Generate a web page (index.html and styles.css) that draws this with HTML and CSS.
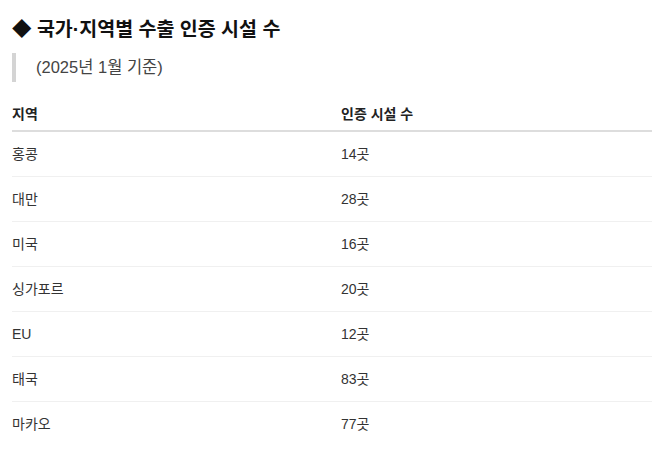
FILE: index.html
```html
<!DOCTYPE html>
<html lang="ko">
<head>
<meta charset="utf-8">
<link rel="stylesheet" href="styles.css">
</head>
<body>
<main class="page">
  <h2 class="title">◆ 국가·지역별 수출 인증 시설 수</h2>
  <blockquote class="note">(2025년 1월 기준)</blockquote>
  <table class="data">
    <thead>
      <tr><th class="c1">지역</th><th>인증 시설 수</th></tr>
    </thead>
    <tbody>
      <tr><td class="c1">홍콩</td><td>14곳</td></tr>
      <tr><td class="c1">대만</td><td>28곳</td></tr>
      <tr><td class="c1">미국</td><td>16곳</td></tr>
      <tr><td class="c1">싱가포르</td><td>20곳</td></tr>
      <tr><td class="c1">EU</td><td>12곳</td></tr>
      <tr><td class="c1">태국</td><td>83곳</td></tr>
      <tr><td class="c1">마카오</td><td>77곳</td></tr>
    </tbody>
  </table>
</main>
</body>
</html>
```
FILE: styles.css
```css
html, body {
  margin: 0;
  padding: 0;
  background: #fff;
}
.page {
  padding: 0 12px;
  font-family: "Liberation Sans", "Noto Sans CJK KR", sans-serif;
  color: #222;
}
.title {
  margin: 15px 0 0;
  font-size: 19.5px;
  line-height: 28px;
  font-weight: 700;
  color: #111;
}
.note {
  margin: 10px 0 0;
  border-left: 4px solid #d4d4d4;
  padding-left: 20px;
  font-size: 16.5px;
  line-height: 29px;
  color: #444;
}
.data {
  margin-top: 10px;
  width: 640px;
  border-collapse: collapse;
  font-size: 14px;
  line-height: 20px;
}
.data th, .data td {
  text-align: left;
  padding: 12px 0;
}
.data th {
  font-weight: 700;
  color: #222;
  padding-bottom: 6px;
  border-bottom: 2px solid #ddd;
}
.data td {
  color: #333;
  border-bottom: 1px solid #f0f0f0;
}
.data tr:last-child td {
  border-bottom: none;
}
.data .c1 {
  width: 329px;
}
```
